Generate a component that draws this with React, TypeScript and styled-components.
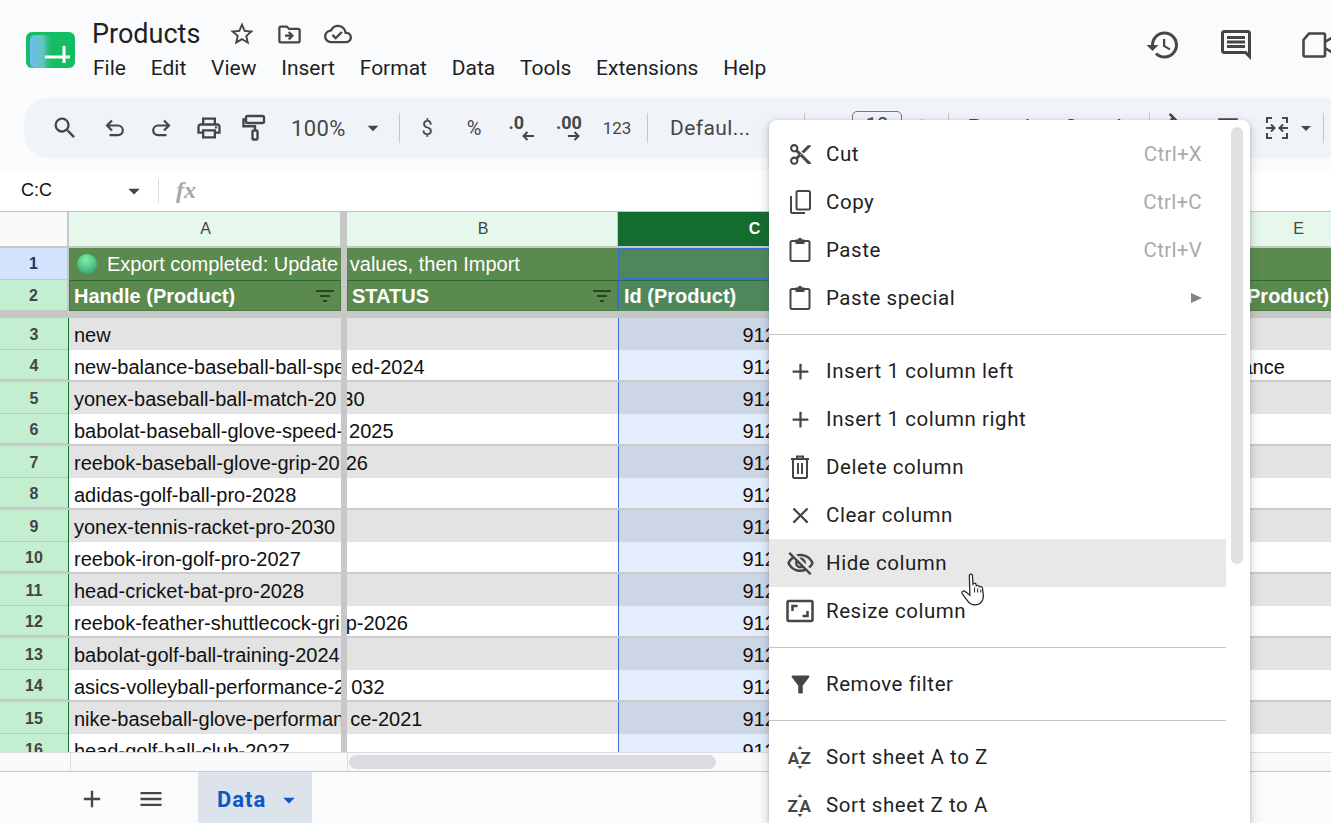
import React from 'react';
import styled, { createGlobalStyle } from 'styled-components';
import {
    MdAdd, MdArrowDropDown, MdClose, MdContentCut, MdFilterAlt, MdHistory, MdMenu,
    MdOutlineAspectRatio, MdOutlineCloudDone, MdOutlineComment,
    MdOutlineDriveFileMove, MdOutlineFormatColorFill, MdOutlinePrint,
    MdOutlineVisibilityOff, MdBorderAll, MdRemove, MdSearch, MdStarBorder,
} from 'react-icons/md';

const GlobalStyle = createGlobalStyle`
    html, body { margin: 0; padding: 0; height: 100%; overflow: hidden; background: #f9fbfd; }
    * { box-sizing: border-box; }
`;

const Page = styled.div`
    position: relative;
    width: 1331px;
    height: 823px;
    display: flex;
    flex-direction: column;
    overflow: hidden;
    background: #f9fbfd;
    font-family: Roboto, sans-serif;
    color: #1f1f1f;
`;

/* title bar */
const TitleBar = styled.div`
    height: 98px;
    flex: none;
    display: flex;
    padding: 17px 0 0 25px;
`;
const LogoBox = styled.svg`
    width: 52px;
    height: 38px;
    margin: 14px 15px 0 0;
    flex: none;
`;
const TitleCol = styled.div`
    display: flex;
    flex-direction: column;
`;
const TitleLine = styled.div`
    display: flex;
    align-items: center;
    height: 34px;
    color: #444746;
`;
const DocName = styled.span`
    font-size: 27px;
    line-height: 34px;
    color: #1f1f1f;
    margin-right: 28px;
`;
const TitleIcon = styled.span<{ $gap: number }>`
    display: flex;
    margin-right: ${p => p.$gap}px;
`;
const MenuBar = styled.div`
    display: flex;
    gap: 24.75px;
    margin-top: 1px;
    padding-left: 1px;
    font-size: 21px;
    line-height: 32px;
`;
const TitleActions = styled.div`
    margin-left: auto;
    display: flex;
    align-items: center;
    height: 56px;
    color: #444746;
    width: 186px;
    flex: none;
    gap: 37px;
    overflow: hidden;
`;
const MeetIcon = styled.svg`
    width: 36px;
    height: 26px;
    margin-left: 11px;
    flex: none;
`;

/* toolbar */
const ToolbarWrap = styled.div`
    height: 72px;
    flex: none;
    padding: 0 0 12px 24px;
`;
const Toolbar = styled.div`
    height: 60px;
    display: flex;
    align-items: center;
    padding-left: 18px;
    background: #f0f4f9;
    border-radius: 24px 0 0 24px;
    color: #444746;
`;
const ToolBtn = styled.div<{ $w: number; $ml?: number }>`
    width: ${p => p.$w}px;
    margin-left: ${p => p.$ml || 0}px;
    flex: none;
    display: flex;
    align-items: center;
    justify-content: center;
    font-size: 20px;
`;
const ToolSep = styled.div<{ $w: number }>`
    width: ${p => p.$w}px;
    flex: none;
    height: 30px;
    display: flex;
    justify-content: center;
    &::after { content: ''; width: 1px; background: #c7c7c7; }
`;
const ToolText = styled.div<{ $w: number; $size: number; $pl: number }>`
    width: ${p => p.$w}px;
    padding-left: ${p => p.$pl}px;
    font-size: ${p => p.$size}px;
    flex: none;
    letter-spacing: .4px;
`;
const DecimalBtn = styled.div<{ $arrow: number }>`
    display: flex;
    flex-direction: column;
    align-items: flex-start;
    font-size: 18px;
    font-weight: 700;
    line-height: 16px;
    svg { margin: 0 0 0 ${p => p.$arrow}px; }
`;
const SmallNum = styled.span`
    font-size: 17px;
`;
const BigGlyph = styled.span`
    font-size: 22px;
    line-height: 24px;
`;
const SizeBox = styled.div`
    width: 50px;
    height: 34px;
    flex: none;
    border: 1px solid #747775;
    border-radius: 5px;
    text-align: center;
    font-size: 20px;
    line-height: 26px;
`;

/* formula bar */
const FormulaBar = styled.div`
    height: 42px;
    flex: none;
    display: flex;
    align-items: center;
    background: #fff;
    border-bottom: 1px solid #c7c7c7;
`;
const NameBox = styled.div`
    width: 159px;
    display: flex;
    align-items: center;
    padding-left: 21px;
    font: 18px "Liberation Sans", Arial, sans-serif;
    color: #111;
    border-right: 1px solid #d3dae3;
    height: 24px;
`;
const NameCaret = styled.span`
    display: flex;
    color: #444746;
    margin-left: auto;
    margin-right: 10px;
`;
const FxLabel = styled.i`
    font: italic bold 24px "Liberation Serif", serif;
    color: #a6a8ab;
    margin-left: 17px;
`;

/* sheet */
const Sheet = styled.div`
    flex: 1;
    min-height: 0;
    overflow: hidden;
    background: #fff;
    font: 20px "Liberation Sans", Arial, sans-serif;
    color: #111;
`;
const COLS = '69px 272px 6px 271px 272px 272px 272px';
const HeaderRow = styled.div`
    display: grid;
    grid-template-columns: ${COLS};
    height: 36px;
    border-bottom: 2px solid #c7c7c7;
`;
const CornerCell = styled.div`
    background: #f8f9fa;
    border-right: 2px solid #c7c7c7;
`;
const ColHead = styled.div<{ $active?: boolean }>`
    display: flex;
    align-items: center;
    justify-content: center;
    padding-left: 2px;
    font-size: 16px;
    background: ${p => (p.$active ? '#146c2e' : '#e6f7ec')};
    color: ${p => (p.$active ? '#fff' : '#444')};
    font-weight: ${p => (p.$active ? 700 : 400)};
    border-right: 1px solid #c7c7c7;
`;
const FreezeBar = styled.div`
    position: relative;
    z-index: 1;
    background: #c7c7c7;
`;
const Row = styled.div<{ $bg: string; $line?: boolean; $h?: number }>`
    display: grid;
    grid-template-columns: ${COLS};
    grid-template-rows: minmax(0, 1fr);
    height: ${p => p.$h || 32}px;
    background: ${p => p.$bg};
    ${p => (p.$line ? 'border-bottom: 2px solid #cbcbcb;' : '')}
    line-height: 34px;
`;
const RowHead = styled.div`
    display: flex;
    align-items: center;
    justify-content: center;
    padding-top: 1px;
    font-size: 16px;
    font-weight: 700;
    color: #444;
    background: #c4eed0;
    border-right: 1px solid #137333;
    box-shadow: inset 0 -1px 0 #c7c7c7;
`;
const TopRowHead = styled(RowHead)<{ $selected?: boolean }>`
    padding-top: 0;
    color: ${p => (p.$selected ? '#1b3a66' : '#444')};
    background: ${p => (p.$selected ? '#d3e3fd' : '#c4eed0')};
    border-right: 2px solid #c7c7c7;
`;
const Cell = styled.div`
    padding-left: 5px;
    white-space: nowrap;
    min-width: 0;
`;
const PaneGap = styled.span`
    display: inline-block;
    width: 6px;
`;
const StatusCell = styled.div`
    display: flex;
    align-items: center;
    padding-left: 8px;
    white-space: nowrap;
    color: #fff;
`;
const Bullet = styled.span`
    width: 20px;
    height: 20px;
    flex: none;
    margin-right: 10px;
    border-radius: 50%;
    background: radial-gradient(circle at 45% 30%, #7ff0a4, #3fb27f 70%, #4b9a86);
`;
const SelectedCell = styled.div`
    background: #4f875c;
    border: 2px solid #3a6fdc;
`;
const HeadCell = styled.div`
    display: flex;
    align-items: center;
    justify-content: space-between;
    padding: 0 6px 0 4px;
    font-weight: 700;
    color: #fff;
    white-space: nowrap;
    border: 1px solid #4a7c3f;
    border-top-color: #2c6a33;
`;
const IdCell = styled(HeadCell)`
    background: #4f875c;
    border-color: #4f875c;
    border-top-color: #2c6a33;
    border-left-color: #3a6fdc;
    padding-left: 5px;
`;
const FilterGlyph = styled.svg`
    width: 18px;
    height: 12px;
    flex: none;
`;
const Band = styled.div`
    height: 7px;
    background: #c7c7c7;
`;
const NumberCell = styled.div<{ $gray: boolean }>`
    background: ${p => (p.$gray ? '#cdd6e5' : '#e4edfc')};
    border-left: 1px solid #3a6fdc;
    text-align: right;
    padding-right: 3px;
`;

/* bottom */
const ScrollStrip = styled.div`
    height: 20px;
    flex: none;
    display: grid;
    grid-template-columns: 71px 277px 1fr;
    background: #f8f9fa;
    border-top: 1px solid #dadce0;
    border-bottom: 1px solid #c7c7c7;
`;
const StripCell = styled.div`
    border-right: 1px solid #dadce0;
`;
const ThumbTrack = styled.div`
    padding: 2px 0 0 1px;
`;
const Thumb = styled.div`
    width: 367px;
    height: 14px;
    border-radius: 7px;
    background: #dadce0;
`;
const TabBar = styled.div`
    height: 51px;
    flex: none;
    display: flex;
    align-items: stretch;
    padding-left: 78px;
    color: #444746;
`;
const TabIcon = styled.div<{ $w: number }>`
    width: ${p => p.$w}px;
    padding-top: 3px;
    display: flex;
    align-items: center;
    justify-content: flex-start;
`;
const SheetTab = styled.div`
    width: 114px;
    display: flex;
    align-items: center;
    padding: 4px 0 0 19px;
    background: #dde3ea;
    color: #0b57d0;
    font-size: 22px;
    font-weight: 700;
    letter-spacing: 1px;
    svg { margin-left: 9px; }
`;

/* context menu */
const ContextMenu = styled.div`
    position: absolute;
    z-index: 5;
    left: 769px;
    top: 120px;
    width: 481px;
    height: 730px;
    padding-top: 10px;
    background: #fff;
    border-radius: 8px;
    box-shadow: 0 1px 3px rgba(60, 64, 67, .3), 0 4px 10px 3px rgba(60, 64, 67, .15);
`;
const MenuList = styled.div`
    width: 457px;
`;
const MenuRow = styled.div<{ $hover?: boolean }>`
    height: 48px;
    display: flex;
    align-items: center;
    padding: 0 24px 0 19px;
    font-size: 20.5px;
    letter-spacing: .55px;
    color: #1f1f1f;
    background: ${p => (p.$hover ? '#e8e8e8' : 'transparent')};
`;
const MenuIcon = styled.span`
    width: 24px;
    height: 24px;
    flex: none;
    margin-right: 14px;
    display: flex;
    align-items: center;
    justify-content: center;
    color: #444746;
    svg { flex: none; }
`;
const Shortcut = styled.span`
    margin-left: auto;
    color: #a8abaa;
    letter-spacing: .3px;
`;
const SubArrow = styled.span`
    margin-left: auto;
    width: 0;
    height: 0;
    border-left: 11px solid #80868b;
    border-top: 5px solid transparent;
    border-bottom: 5px solid transparent;
`;
const MenuDivider = styled.div`
    height: 1px;
    margin: 12px 0;
    background: #c7c7c7;
`;
const MenuScroll = styled.div`
    position: absolute;
    left: 462px;
    top: 7px;
    width: 12px;
    height: 437px;
    border-radius: 6px;
    background: #e0e2e0;
`;
const HandCursor = styled.svg`
    position: absolute;
    z-index: 6;
    left: 960px;
    top: 573px;
    width: 27px;
    height: 33px;
`;

const IconSvg = styled.svg`
    display: block;
    flex: none;
`;

const FilterIcon = () => (
    <FilterGlyph viewBox="0 0 18 12">
        <path d="M0 1h18M4 6h10M7 11h4" stroke="#1f2a1f" strokeWidth="1.6" fill="none" />
    </FilterGlyph>
);

const Logo = () => (
    <LogoBox viewBox="0 0 52 38">
        <defs>
            <linearGradient id="logoBlue" x1="0" x2="1" y1="0" y2="0">
                <stop offset="0" stopColor="#6dbdf6" />
                <stop offset=".55" stopColor="#7cc6e0" stopOpacity=".75" />
                <stop offset="1" stopColor="#13bd62" stopOpacity="0" />
            </linearGradient>
        </defs>
        <rect x="1" y="1" width="49" height="36" rx="6" fill="#13bd62" />
        <rect x="5" y="4" width="24" height="33" rx="5" fill="url(#logoBlue)" />
        <path d="M20 26h25M39 15v17" stroke="#fff" strokeWidth="3" fill="none" />
    </LogoBox>
);

const UndoIcon = ({ flip }: { flip?: boolean }) => (
    <IconSvg width="24" height="24" viewBox="0 0 24 24" fill="none" stroke="#444746" strokeWidth="2.2" style={flip ? { transform: 'scaleX(-1)' } : undefined}>
        <path d="M4.5 9.5H15a4.8 4.8 0 0 1 0 9.6H6.5M9 4.5l-5 5 5 5" />
    </IconSvg>
);

const PaintIcon = () => (
    <IconSvg width="24" height="28" viewBox="0 0 24 28" fill="none" stroke="#444746" strokeWidth="2.4">
        <rect x="4" y="2" width="18" height="7" rx="1.5" />
        <path d="M4 5.5H1.5v6.7H13v4" />
        <rect x="10.5" y="16.5" width="5" height="9" rx="1" />
    </IconSvg>
);

const MergeIcon = () => (
    <IconSvg width="26" height="26" viewBox="0 0 26 26" fill="none" stroke="#444746" strokeWidth="2">
        <path d="M8 3H3v5M8 23H3v-5M18 3h5v5M18 23h5v-5M2 13h8M7 9.5l3.5 3.5L7 16.5M24 13h-8M19 9.5L15.5 13l3.5 3.5" />
    </IconSvg>
);

const ArrowLeft = () => (
    <IconSvg width="12" height="10" viewBox="0 0 12 10" fill="none" stroke="#444746" strokeWidth="2">
        <path d="M12 5H2M5.5 1L1.5 5l4 4" />
    </IconSvg>
);
const ArrowRight = () => (
    <IconSvg width="12" height="10" viewBox="0 0 12 10" fill="none" stroke="#444746" strokeWidth="2">
        <path d="M0 5h10M6.5 1l4 4-4 4" />
    </IconSvg>
);

const CopyIcon = () => (
    <IconSvg width="24" height="26" viewBox="0 0 24 26" fill="none" stroke="#444746" strokeWidth="2">
        <rect x="8.5" y="2" width="13.5" height="18.5" rx="1.5" />
        <path d="M3 7v15.5A1.5 1.5 0 0 0 4.5 24H17" />
    </IconSvg>
);

const PasteIcon = () => (
    <IconSvg width="24" height="26" viewBox="0 0 24 26" fill="none">
        <rect x="2.5" y="4" width="19" height="20" rx="1.5" stroke="#444746" strokeWidth="2" />
        <path d="M7.5 2.5h2.2a2.4 2.4 0 0 1 4.6 0h2.2V7h-9z" fill="#444746" />
    </IconSvg>
);

const TrashIcon = () => (
    <IconSvg width="24" height="26" viewBox="0 0 24 26" fill="none" stroke="#444746" strokeWidth="2">
        <path d="M3 5h18M9 5V2.5h6V5M5 5v17.5A1.5 1.5 0 0 0 6.5 24h11a1.5 1.5 0 0 0 1.5-1.5V5M10 9v11M14 9v11" />
    </IconSvg>
);

// letters stay real text, the chevrons are the drawn part
const SortIcon = ({ letters }: { letters: string }) => (
    <IconSvg width="26" height="26" viewBox="0 0 26 26">
        <path d="M10.5 5L13 2l2.5 3zM10.5 22l2.5 3 2.5-3z" fill="#444746" />
        <text x="13" y="19.5" textAnchor="middle" fontFamily="Roboto, sans-serif" fontWeight="700" fontSize="17" letterSpacing="1.5" fill="#444746">{letters}</text>
    </IconSvg>
);

// the frozen pane divider pushes overflowing text 6px to the right, | marks where
const PaneText = ({ text }: { text: string }) => {
    const [left, right] = text.split('|');
    return (
        <span>
            {left}
            {right && <PaneGap />}
            {right}
        </span>
    );
};

interface MenuEntryProps {
    icon: React.ReactNode;
    label: string;
    shortcut?: string;
    submenu?: boolean;
    hover?: boolean;
}

const MenuEntry = (props: MenuEntryProps) => (
    <MenuRow $hover={props.hover}>
        <MenuIcon>{props.icon}</MenuIcon>
        {props.label}
        {props.shortcut && <Shortcut>{props.shortcut}</Shortcut>}
        {props.submenu && <SubArrow />}
    </MenuRow>
);

const handles = [
    'new',
    'new-balance-baseball-ball-spe|ed-2024',
    'yonex-baseball-ball-match-20|30',
    'babolat-baseball-glove-speed-|2025',
    'reebok-baseball-glove-grip-20|26',
    'adidas-golf-ball-pro-2028',
    'yonex-tennis-racket-pro-2030',
    'reebok-iron-golf-pro-2027',
    'head-cricket-bat-pro-2028',
    'reebok-feather-shuttlecock-gri|p-2026',
    'babolat-golf-ball-training-2024',
    'asics-volleyball-performance-2|032',
    'nike-baseball-glove-performan|ce-2021',
    'head-golf-ball-club-2027',
];

const menuWords = ['File', 'Edit', 'View', 'Insert', 'Format', 'Data', 'Tools', 'Extensions', 'Help'];

const App = () => {
    return (
        <Page>
            <GlobalStyle />
            <TitleBar>
                <Logo />
                <TitleCol>
                    <TitleLine>
                        <DocName>Products</DocName>
                        <TitleIcon $gap={20}><MdStarBorder size={28} /></TitleIcon>
                        <TitleIcon $gap={21}><MdOutlineDriveFileMove size={27} /></TitleIcon>
                        <TitleIcon $gap={21}><MdOutlineCloudDone size={28} /></TitleIcon>
                    </TitleLine>
                    <MenuBar>
                        {menuWords.map(word => <span key={word}>{word}</span>)}
                    </MenuBar>
                </TitleCol>
                <TitleActions>
                    <MdHistory size={36} style={{ flex: 'none' }} />
                    <MdOutlineComment size={36} style={{ flex: 'none' }} />
                    <MeetIcon viewBox="0 0 36 26" fill="none" stroke="#444746" strokeWidth="2.6">
                        <path d="M7 1.5H21.5a1.5 1.5 0 0 1 1.5 1.5V23a1.5 1.5 0 0 1-1.5 1.5H3A1.5 1.5 0 0 1 1.5 23V8zM23 10l11-7V23l-11-7" />
                    </MeetIcon>
                </TitleActions>
            </TitleBar>

            <ToolbarWrap>
                <Toolbar>
                    <ToolBtn $w={46}><MdSearch size={28} /></ToolBtn>
                    <ToolBtn $w={54}><UndoIcon /></ToolBtn>
                    <ToolBtn $w={38}><UndoIcon flip /></ToolBtn>
                    <ToolBtn $w={58}><MdOutlinePrint size={28} /></ToolBtn>
                    <ToolBtn $w={32}><PaintIcon /></ToolBtn>
                    <ToolText $w={90} $size={22} $pl={21}>100%</ToolText>
                    <ToolBtn $w={26}><MdArrowDropDown size={30} /></ToolBtn>
                    <ToolSep $w={26} />
                    <ToolBtn $w={30}>$</ToolBtn>
                    <ToolBtn $w={64}>%</ToolBtn>
                    <ToolBtn $w={30}><DecimalBtn $arrow={13}>.0<ArrowLeft /></DecimalBtn></ToolBtn>
                    <ToolBtn $w={66}><DecimalBtn $arrow={12}>.00<ArrowRight /></DecimalBtn></ToolBtn>
                    <ToolBtn $w={30}><SmallNum>123</SmallNum></ToolBtn>
                    <ToolSep $w={30} />
                    <ToolText $w={128} $size={21} $pl={8}>Defaul...</ToolText>
                    <ToolSep $w={28} />
                    <ToolBtn $w={34}><MdRemove size={24} /></ToolBtn>
                    <SizeBox>10</SizeBox>
                    <ToolBtn $w={40}><MdAdd size={28} /></ToolBtn>
                    <ToolSep $w={12} />
                    <ToolBtn $w={42}><BigGlyph><strong>B</strong></BigGlyph></ToolBtn>
                    <ToolBtn $w={60}><BigGlyph><em>I</em></BigGlyph></ToolBtn>
                    <ToolBtn $w={30}><BigGlyph><s>S</s></BigGlyph></ToolBtn>
                    <ToolBtn $w={46} $ml={10}><BigGlyph>A</BigGlyph></ToolBtn>
                    <ToolSep $w={14} />
                    <ToolBtn $w={40}><MdOutlineFormatColorFill size={30} /></ToolBtn>
                    <ToolBtn $w={64}><MdBorderAll size={26} /></ToolBtn>
                    <ToolBtn $w={34}><MergeIcon /></ToolBtn>
                    <ToolBtn $w={24}><MdArrowDropDown size={30} /></ToolBtn>
                    <ToolSep $w={10} />
                </Toolbar>
            </ToolbarWrap>

            <FormulaBar>
                <NameBox>
                    C:C
                    <NameCaret><MdArrowDropDown size={28} /></NameCaret>
                </NameBox>
                <FxLabel>fx</FxLabel>
            </FormulaBar>

            <Sheet>
                <HeaderRow>
                    <CornerCell />
                    <ColHead>A</ColHead>
                    <FreezeBar />
                    <ColHead>B</ColHead>
                    <ColHead $active>C</ColHead>
                    <ColHead>D</ColHead>
                    <ColHead>E</ColHead>
                </HeaderRow>
                <Row $bg="#5a8a4d" $h={32}>
                    <TopRowHead $selected>1</TopRowHead>
                    <StatusCell><Bullet /><PaneText text="Export completed: Update| values, then Import" /></StatusCell>
                    <FreezeBar />
                    <Cell />
                    <SelectedCell />
                    <Cell />
                    <Cell />
                </Row>
                <Row $bg="#5a8a4d" $h={31}>
                    <TopRowHead>2</TopRowHead>
                    <HeadCell>Handle (Product)<FilterIcon /></HeadCell>
                    <FreezeBar />
                    <HeadCell>STATUS<FilterIcon /></HeadCell>
                    <IdCell>Id (Product)</IdCell>
                    <HeadCell />
                    <HeadCell>Vendor (Product)</HeadCell>
                </Row>
                <Band />
                {handles.map((handle, i) => {
                    const gray = i % 2 === 0;
                    return (
                        <Row key={handle} $bg={gray ? '#e3e3e3' : '#fff'} $line={!gray}>
                            <RowHead>{i + 3}</RowHead>
                            <Cell><PaneText text={handle} /></Cell>
                            <FreezeBar />
                            <Cell />
                            <NumberCell $gray={gray}>9123456789012</NumberCell>
                            <Cell />
                            <Cell>{i === 1 ? 'New Balance' : ''}</Cell>
                        </Row>
                    );
                })}
            </Sheet>

            <ScrollStrip>
                <StripCell />
                <StripCell />
                <ThumbTrack><Thumb /></ThumbTrack>
            </ScrollStrip>
            <TabBar>
                <TabIcon $w={59}><MdAdd size={28} /></TabIcon>
                <TabIcon $w={61}><MdMenu size={28} /></TabIcon>
                <SheetTab>Data<MdArrowDropDown size={28} /></SheetTab>
            </TabBar>

            <ContextMenu>
                <MenuScroll />
                <MenuList>
                    <MenuEntry icon={<MdContentCut size={25} />} label="Cut" shortcut="Ctrl+X" />
                    <MenuEntry icon={<CopyIcon />} label="Copy" shortcut="Ctrl+C" />
                    <MenuEntry icon={<PasteIcon />} label="Paste" shortcut="Ctrl+V" />
                    <MenuEntry icon={<PasteIcon />} label="Paste special" submenu />
                    <MenuDivider />
                    <MenuEntry icon={<MdAdd size={27} />} label="Insert 1 column left" />
                    <MenuEntry icon={<MdAdd size={27} />} label="Insert 1 column right" />
                    <MenuEntry icon={<TrashIcon />} label="Delete column" />
                    <MenuEntry icon={<MdClose size={27} />} label="Clear column" />
                    <MenuEntry icon={<MdOutlineVisibilityOff size={29} />} label="Hide column" hover />
                    <MenuEntry icon={<MdOutlineAspectRatio size={30} />} label="Resize column" />
                    <MenuDivider />
                    <MenuEntry icon={<MdFilterAlt size={27} />} label="Remove filter" />
                    <MenuDivider />
                    <MenuEntry icon={<SortIcon letters="AZ" />} label="Sort sheet A to Z" />
                    <MenuEntry icon={<SortIcon letters="ZA" />} label="Sort sheet Z to A" />
                </MenuList>
            </ContextMenu>
            <HandCursor viewBox="0 0 25 32">
                <path
                    d="M8.5 2.5C8.5.5 11.5.5 11.5 2.5L12 12V11C12 9.5 15 9.5 15 11.2V13C15 11.5 18 11.5 18 13V14C18 12.8 21 12.8 21.2 14.5L22 21C22.5 27 19 31 14 31 10 31 8 29 6 26L1.5 20C.5 18.5 2.5 16.5 4.5 18L9 21.5Z"
                    fill="#fff"
                    stroke="#1f2430"
                    strokeWidth="1.2"
                />
                <path d="M13.5 14v5M16.5 15v4M19.5 16v3" stroke="#1f2430" strokeWidth="1" fill="none" />
            </HandCursor>
        </Page>
    );
};

export default App;
